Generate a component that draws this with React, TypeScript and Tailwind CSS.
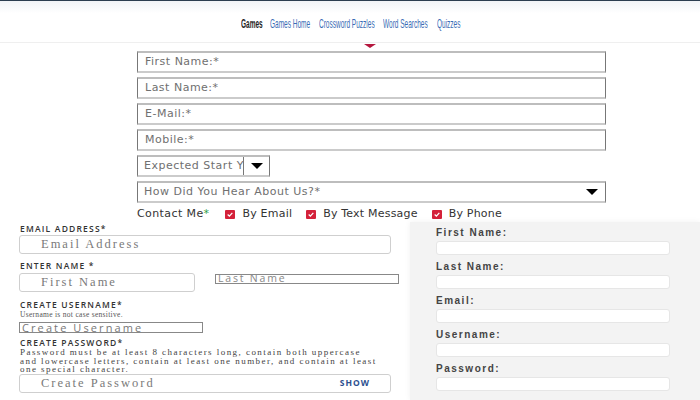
const sans = { fontFamily: '"DejaVu Sans", Verdana, sans-serif' };

function NavLink({ label, width, active }: { label: string; width: string; active?: boolean }) {
    return (
        <span className={`${width} inline-block overflow-visible whitespace-nowrap`}>
            <span
                className={`inline-block origin-left scale-x-[0.5] font-['Liberation_Sans',Arial,sans-serif] text-[13px] ${
                    active ? 'font-bold text-[#1f1f1f]' : 'text-[#3a6db5]'
                }`}
            >
                {label}
            </span>
        </span>
    );
}

function Caret() {
    return <span className="block h-0 w-0 border-x-[6px] border-t-[6px] border-x-transparent border-t-black" />;
}

function OldInput({ placeholder }: { placeholder: string }) {
    return (
        <div className="flex h-[22px] w-[469px] items-center border-x border-t-2 border-b-2 border-x-[#777] border-t-[#bdbdbd] border-b-[#cbcbcb] bg-white pl-[7px]">
            <span className="text-[11px] tracking-[0.5px] text-[#707070]" style={sans}>
                {placeholder}
            </span>
        </div>
    );
}

function Check({ label }: { label: string }) {
    return (
        <span className="flex items-center">
            <span className="flex h-[9px] w-[10px] items-center justify-center rounded-[1px] bg-[#d4213a]">
                <svg viewBox="0 0 10 9" className="h-[7px] w-[8px]">
                    <path d="M2 4.6 L4.2 6.6 L8 2.4" fill="none" stroke="white" strokeWidth="1.6" />
                </svg>
            </span>
            <span className="ml-[7px] text-[11px] tracking-[0.2px] text-[#333]" style={sans}>
                {label}
            </span>
        </span>
    );
}

function SmallLabel({ text, className = '' }: { text: string; className?: string }) {
    return (
        <div
            className={`h-[10px] font-['Open_Sans',sans-serif] text-[8.5px] leading-[10px] font-semibold tracking-[1.2px] text-[#333] ${className}`}
        >
            {text}
        </div>
    );
}

function RightField({ label, first }: { label: string; first?: boolean }) {
    return (
        <div className={first ? 'mt-[6px]' : 'mt-[7px]'}>
            <div className="h-[10px] font-['Liberation_Sans',Arial,sans-serif] text-[10px] leading-[10px] font-bold tracking-[1.5px] text-[#444]">
                {label}
            </div>
            <div className="mt-[3px] h-[14px] w-[234px] rounded-[3px] border border-[#e6e6e6] bg-white" />
        </div>
    );
}

export default function App() {
    const serif = "font-['Liberation_Serif','Times_New_Roman',serif]";

    return (
        <div className="h-[400px] w-[700px] overflow-hidden bg-white">
            {/* top navigation */}
            <div className="flex h-[43px] items-center border-t border-b border-t-[#2c3d4f] border-b-[#efefef] bg-gradient-to-b from-[#f1f3f6] to-white to-30% pl-[241px]">
                <NavLink label="Games" width="w-[19px]" active />
                <span className="w-[10px]" />
                <NavLink label="Games Home" width="w-[39px]" />
                <span className="w-[10px]" />
                <NavLink label="Crossword Puzzles" width="w-[54px]" />
                <span className="w-[10px]" />
                <NavLink label="Word Searches" width="w-[42px]" />
                <span className="w-[12px]" />
                <NavLink label="Quizzes" width="w-[22px]" />
            </div>

            <div className="h-[8px] pt-[1px] pl-[364px]">
                <span className="block h-0 w-0 border-x-[6px] border-t-[4px] border-x-transparent border-t-[#b5173f]" />
            </div>

            {/* first form */}
            <div className="ml-[137px] flex flex-col gap-[4px]">
                <OldInput placeholder="First Name:*" />
                <OldInput placeholder="Last Name:*" />
                <OldInput placeholder="E-Mail:*" />
                <OldInput placeholder="Mobile:*" />
                <div className="flex h-[22px] w-[133px] items-center border-x border-t-2 border-b-2 border-x-[#777] border-t-[#bdbdbd] border-b-[#cbcbcb] bg-white">
                    <span className="w-[105px] pl-[6px] text-[11px] whitespace-nowrap tracking-[0.5px] text-[#707070]" style={sans}>
                        Expected Start Y
                    </span>
                    <span className="h-full w-px bg-[#777]" />
                    <span className="flex flex-1 justify-center">
                        <Caret />
                    </span>
                </div>
                <div className="flex h-[22px] w-[469px] items-center border-x border-t-2 border-b-2 border-x-[#777] border-t-[#bdbdbd] border-b-[#cbcbcb] bg-white">
                    <span className="flex-1 pl-[6px] text-[11px] tracking-[0.5px] text-[#707070]" style={sans}>
                        How Did You Hear About Us?*
                    </span>
                    <span className="mr-[7px]">
                        <Caret />
                    </span>
                </div>
            </div>

            <div className="mt-[4px] ml-[137px] flex h-[14px] items-center">
                <span className="text-[11px] tracking-[0.4px] text-[#333]" style={sans}>
                    Contact Me<span className="text-[#2e9e45]">*</span>
                </span>
                <span className="ml-[16px] flex items-center gap-[14px]">
                    <Check label="By Email" />
                    <Check label="By Text Message" />
                    <Check label="By Phone" />
                </span>
            </div>

            {/* lower screenshots */}
            <div className="mt-[1px] grid h-[178px] grid-cols-[410px_1fr]">
                <div className="flex flex-col bg-white pl-[19px]">
                    <SmallLabel text="EMAIL ADDRESS*" className="mt-[2px] pl-px" />
                    <div className="mt-px flex h-[19px] w-[372px] items-center rounded-[3px] border border-[#cfcfcf] pl-[21px]">
                        <span className={`${serif} text-[12.5px] tracking-[2px] text-[#7a7a7a]`}>Email Address</span>
                    </div>

                    <SmallLabel text="ENTER NAME *" className="mt-[7px] pl-px" />
                    <div className="mt-[2px] flex items-start">
                        <div className="flex h-[19px] w-[176px] items-center rounded-[3px] border border-[#cfcfcf] pl-[21px]">
                            <span className={`${serif} text-[12.5px] tracking-[2px] text-[#7a7a7a]`}>First Name</span>
                        </div>
                        <div className="mt-px ml-[20px] flex h-[10px] w-[184px] items-center border border-[#888] pl-[2px]">
                            <span className="font-['Open_Sans',sans-serif] text-[10.5px] tracking-[1.8px] text-[#888]">Last Name</span>
                        </div>
                    </div>

                    <SmallLabel text="CREATE USERNAME*" className="mt-[8px] pl-px" />
                    <div className={`${serif} h-[9px] pl-px text-[7.5px] leading-[9px] tracking-[0.3px] text-[#555]`}>
                        Username is not case sensitive.
                    </div>
                    <div className="mt-[3px] flex h-[11px] w-[184px] items-center border border-[#888] pl-[2px]">
                        <span className="font-['Open_Sans',sans-serif] text-[11px] leading-[11px] tracking-[2.1px] text-[#777]">
                            Create Username
                        </span>
                    </div>

                    <SmallLabel text="CREATE PASSWORD*" className="mt-[5px] pl-px" />
                    <p className={`${serif} pl-px text-[9px] leading-[8.5px] whitespace-nowrap tracking-[1.45px] text-[#444]`}>
                        Password must be at least 8 characters long, contain both uppercase
                        <br />
                        and lowercase letters, contain at least one number, and contain at least
                        <br />
                        one special character.
                    </p>
                    <div className="flex h-[19px] w-[372px] items-center rounded-[3px] border border-[#cfcfcf] pl-[21px]">
                        <span className={`${serif} flex-1 text-[12.5px] tracking-[2px] text-[#7a7a7a]`}>Create Password</span>
                        <span className="mr-[20px] font-['Open_Sans',sans-serif] text-[8.5px] font-bold tracking-[1px] text-[#2c4f8f]">SHOW</span>
                    </div>
                </div>

                <div className="bg-[#f3f3f3] pl-[26px] shadow-[0_0_6px_rgba(0,0,0,0.06)]">
                    <RightField label="First Name:" first />
                    <RightField label="Last Name:" />
                    <RightField label="Email:" />
                    <RightField label="Username:" />
                    <RightField label="Password:" />
                </div>
            </div>
        </div>
    );
}
